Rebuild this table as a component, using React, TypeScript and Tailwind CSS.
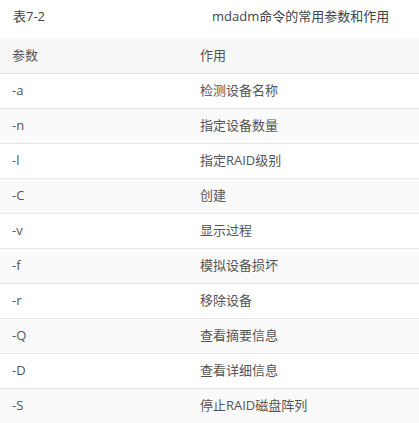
const rows: [string, string][] = [
  ["-a", "检测设备名称"],
  ["-n", "指定设备数量"],
  ["-l", "指定RAID级别"],
  ["-C", "创建"],
  ["-v", "显示过程"],
  ["-f", "模拟设备损坏"],
  ["-r", "移除设备"],
  ["-Q", "查看摘要信息"],
  ["-D", "查看详细信息"],
  ["-S", "停止RAID磁盘阵列"],
];

export default function App() {
  return (
    <div
      className="w-[419px] h-[423px] overflow-hidden bg-white text-[13px] text-[#555]"
      style={{ fontFamily: '"Open Sans", "Noto Sans CJK SC", sans-serif' }}
    >
      <div className="grid grid-cols-[200px_1fr] h-[38px] items-center pb-1">
        <div className="pl-[13px] text-[#444]">表7-2</div>
        <div className="pl-[12px] text-[#444]">mdadm命令的常用参数和作用</div>
      </div>
      <div className="grid grid-cols-[200px_1fr] h-[36px] items-center bg-[#f7f7f7] border-b border-[#e6e6e6]">
        <div className="pl-[12px]">参数</div>
        <div>作用</div>
      </div>
      {rows.map(([flag, desc], i) => (
        <div
          key={flag}
          className={
            "grid grid-cols-[200px_1fr] h-[35px] items-center border-b border-[#e6e6e6] " +
            (i % 2 === 1 ? "bg-[#fafafa]" : "bg-white")
          }
        >
          <div className="pl-[12px]">{flag}</div>
          <div>{desc}</div>
        </div>
      ))}
    </div>
  );
}
